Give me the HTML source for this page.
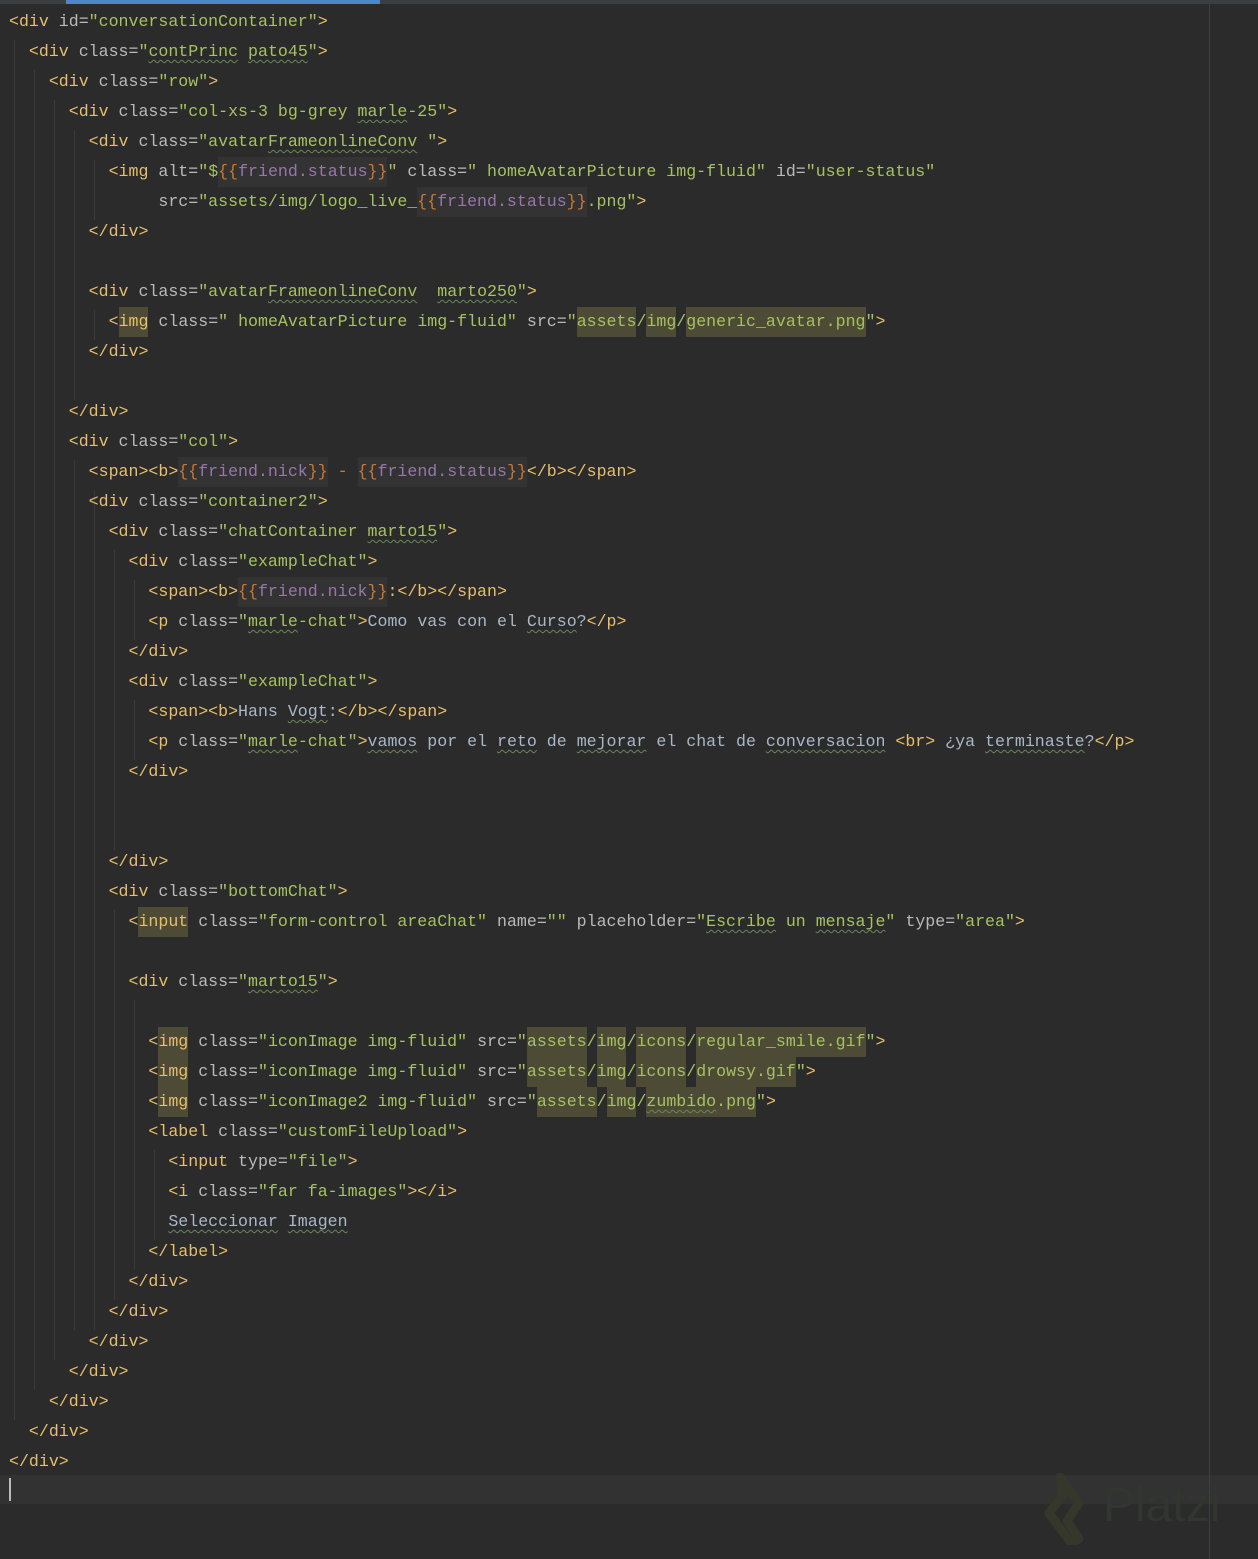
<!DOCTYPE html>
<html><head><meta charset="utf-8"><style>
html,body{margin:0;padding:0;background:#2b2b2b;width:1258px;height:1559px;overflow:hidden}
#bar{position:absolute;left:66px;top:0;width:314px;height:4px;background:#4a88c7}
#topline{position:absolute;left:0;top:0;width:1258px;height:4px;background:#3c3f41;z-index:0}
#rl{position:absolute;left:1209px;top:4px;width:1px;height:1555px;background:#3f3f3f}
#cur{position:absolute;left:0;top:1475px;width:1258px;height:29px;background:#323232}
#caret{position:absolute;left:9px;top:1478px;width:2px;height:23px;background:#bbb}
#code{position:absolute;left:9px;top:7px;font-family:"Liberation Mono",monospace;font-size:16.6px;color:#a9b7c6}
.l{height:30px;line-height:30px;white-space:pre}
.t{color:#e8bf6a}.a{color:#bababa}.v{color:#a5c261}.b{color:#cc7832}.p{color:#9876aa}.x{color:#a9b7c6}
.h{background:#4d4b35;display:inline-block;height:30px}
.g{background:#333333;display:inline-block;height:30px}
.w{text-decoration:underline wavy #6a8759;text-decoration-thickness:1px;text-underline-offset:3px}
.gl{position:absolute;width:1px;background:#3a3a3a}
</style></head><body>
<div id="topline"></div><div id="bar"></div>
<div id="cur"></div><div id="caret"></div>
<div id="rl"></div>
<div class="gl" style="left:14px;top:40px;height:1380px"></div>
<div class="gl" style="left:34px;top:70px;height:1320px"></div>
<div class="gl" style="left:54px;top:100px;height:1260px"></div>
<div class="gl" style="left:74px;top:130px;height:270px"></div>
<div class="gl" style="left:74px;top:460px;height:870px"></div>
<div class="gl" style="left:94px;top:160px;height:60px"></div>
<div class="gl" style="left:94px;top:310px;height:30px"></div>
<div class="gl" style="left:94px;top:490px;height:840px"></div>
<div class="gl" style="left:114px;top:550px;height:300px"></div>
<div class="gl" style="left:114px;top:910px;height:390px"></div>
<div class="gl" style="left:134px;top:580px;height:60px"></div>
<div class="gl" style="left:134px;top:700px;height:60px"></div>
<div class="gl" style="left:134px;top:1000px;height:270px"></div>
<div class="gl" style="left:154px;top:1150px;height:90px"></div>
<svg style="position:absolute;left:1035px;top:1473px" width="60" height="72" viewBox="0 0 60 72"><path d="M25 4 L44 30 L32 48 L44 66 L36 70 L14 40 L28 22 Z" fill="none" stroke="#34372a" stroke-width="9" stroke-linejoin="round"/></svg>
<div style="position:absolute;left:1103px;top:1478px;font-family:'Liberation Sans',sans-serif;font-size:48px;color:#323530">Platzi</div>
<div id="code">
<div class="l"><span class="t">&lt;div </span><span class="a">id=</span><span class="v">"conversationContainer"</span><span class="t">&gt;</span></div>
<div class="l">  <span class="t">&lt;div </span><span class="a">class=</span><span class="v">"<span class="w">contPrinc</span> <span class="w">pato45</span>"</span><span class="t">&gt;</span></div>
<div class="l">    <span class="t">&lt;div </span><span class="a">class=</span><span class="v">"row"</span><span class="t">&gt;</span></div>
<div class="l">      <span class="t">&lt;div </span><span class="a">class=</span><span class="v">"col-xs-3 bg-grey <span class="w">marle</span>-25"</span><span class="t">&gt;</span></div>
<div class="l">        <span class="t">&lt;div </span><span class="a">class=</span><span class="v">"avatar<span class="w">FrameonlineConv</span> "</span><span class="t">&gt;</span></div>
<div class="l">          <span class="t">&lt;img </span><span class="a">alt=</span><span class="v">"$</span><span class="g"><span class="b">{{</span><span class="p">friend.status</span><span class="b">}}</span></span><span class="v">"</span> <span class="a">class=</span><span class="v">" homeAvatarPicture img-fluid"</span> <span class="a">id=</span><span class="v">"user-status"</span></div>
<div class="l">               <span class="a">src=</span><span class="v">"assets/img/logo_live_</span><span class="g"><span class="b">{{</span><span class="p">friend.status</span><span class="b">}}</span></span><span class="v">.png"</span><span class="t">&gt;</span></div>
<div class="l">        <span class="t">&lt;/div&gt;</span></div>
<div class="l"> </div>
<div class="l">        <span class="t">&lt;div </span><span class="a">class=</span><span class="v">"avatar<span class="w">FrameonlineConv</span>  <span class="w">marto250</span>"</span><span class="t">&gt;</span></div>
<div class="l">          <span class="t">&lt;</span><span class="h t">img</span> <span class="a">class=</span><span class="v">" homeAvatarPicture img-fluid"</span> <span class="a">src=</span><span class="v">"<span class="h">assets</span>/<span class="h">img</span>/<span class="h">generic_avatar.png</span>"</span><span class="t">&gt;</span></div>
<div class="l">        <span class="t">&lt;/div&gt;</span></div>
<div class="l"> </div>
<div class="l">      <span class="t">&lt;/div&gt;</span></div>
<div class="l">      <span class="t">&lt;div </span><span class="a">class=</span><span class="v">"col"</span><span class="t">&gt;</span></div>
<div class="l">        <span class="t">&lt;span&gt;&lt;b&gt;</span><span class="g"><span class="b">{{</span><span class="p">friend.nick</span><span class="b">}}</span></span> <span class="b">-</span> <span class="g"><span class="b">{{</span><span class="p">friend.status</span><span class="b">}}</span></span><span class="t">&lt;/b&gt;&lt;/span&gt;</span></div>
<div class="l">        <span class="t">&lt;div </span><span class="a">class=</span><span class="v">"container2"</span><span class="t">&gt;</span></div>
<div class="l">          <span class="t">&lt;div </span><span class="a">class=</span><span class="v">"chatContainer <span class="w">marto15</span>"</span><span class="t">&gt;</span></div>
<div class="l">            <span class="t">&lt;div </span><span class="a">class=</span><span class="v">"exampleChat"</span><span class="t">&gt;</span></div>
<div class="l">              <span class="t">&lt;span&gt;&lt;b&gt;</span><span class="g"><span class="b">{{</span><span class="p">friend.nick</span><span class="b">}}</span></span><span class="t">:&lt;/b&gt;&lt;/span&gt;</span></div>
<div class="l">              <span class="t">&lt;p </span><span class="a">class=</span><span class="v">"<span class="w">marle</span>-chat"</span><span class="t">&gt;</span>Como vas con el <span class="w">Curso</span>?<span class="t">&lt;/p&gt;</span></div>
<div class="l">            <span class="t">&lt;/div&gt;</span></div>
<div class="l">            <span class="t">&lt;div </span><span class="a">class=</span><span class="v">"exampleChat"</span><span class="t">&gt;</span></div>
<div class="l">              <span class="t">&lt;span&gt;&lt;b&gt;</span>Hans <span class="w">Vogt</span>:<span class="t">&lt;/b&gt;&lt;/span&gt;</span></div>
<div class="l">              <span class="t">&lt;p </span><span class="a">class=</span><span class="v">"<span class="w">marle</span>-chat"</span><span class="t">&gt;</span><span class="w">vamos</span> por el <span class="w">reto</span> de <span class="w">mejorar</span> el chat de <span class="w">conversacion</span> <span class="t">&lt;br&gt;</span> ¿ya <span class="w">terminaste</span>?<span class="t">&lt;/p&gt;</span></div>
<div class="l">            <span class="t">&lt;/div&gt;</span></div>
<div class="l"> </div>
<div class="l"> </div>
<div class="l">          <span class="t">&lt;/div&gt;</span></div>
<div class="l">          <span class="t">&lt;div </span><span class="a">class=</span><span class="v">"bottomChat"</span><span class="t">&gt;</span></div>
<div class="l">            <span class="t">&lt;</span><span class="h t">input</span> <span class="a">class=</span><span class="v">"form-control areaChat"</span> <span class="a">name=</span><span class="v">""</span> <span class="a">placeholder=</span><span class="v">"<span class="w">Escribe</span> un <span class="w">mensaje</span>"</span> <span class="a">type=</span><span class="v">"area"</span><span class="t">&gt;</span></div>
<div class="l"> </div>
<div class="l">            <span class="t">&lt;div </span><span class="a">class=</span><span class="v">"<span class="w">marto15</span>"</span><span class="t">&gt;</span></div>
<div class="l"> </div>
<div class="l">              <span class="t">&lt;</span><span class="h t">img</span> <span class="a">class=</span><span class="v">"iconImage img-fluid"</span> <span class="a">src=</span><span class="v">"<span class="h">assets</span>/<span class="h">img</span>/<span class="h">icons</span>/<span class="h">regular_smile.gif</span>"</span><span class="t">&gt;</span></div>
<div class="l">              <span class="t">&lt;</span><span class="h t">img</span> <span class="a">class=</span><span class="v">"iconImage img-fluid"</span> <span class="a">src=</span><span class="v">"<span class="h">assets</span>/<span class="h">img</span>/<span class="h">icons</span>/<span class="h">drowsy.gif</span>"</span><span class="t">&gt;</span></div>
<div class="l">              <span class="t">&lt;</span><span class="h t">img</span> <span class="a">class=</span><span class="v">"iconImage2 img-fluid"</span> <span class="a">src=</span><span class="v">"<span class="h">assets</span>/<span class="h">img</span>/<span class="h"><span class="w">zumbido</span>.png</span>"</span><span class="t">&gt;</span></div>
<div class="l">              <span class="t">&lt;label </span><span class="a">class=</span><span class="v">"customFileUpload"</span><span class="t">&gt;</span></div>
<div class="l">                <span class="t">&lt;input </span><span class="a">type=</span><span class="v">"file"</span><span class="t">&gt;</span></div>
<div class="l">                <span class="t">&lt;i </span><span class="a">class=</span><span class="v">"far fa-images"</span><span class="t">&gt;&lt;/i&gt;</span></div>
<div class="l">                <span class="w">Seleccionar</span> <span class="w">Imagen</span></div>
<div class="l">              <span class="t">&lt;/label&gt;</span></div>
<div class="l">            <span class="t">&lt;/div&gt;</span></div>
<div class="l">          <span class="t">&lt;/div&gt;</span></div>
<div class="l">        <span class="t">&lt;/div&gt;</span></div>
<div class="l">      <span class="t">&lt;/div&gt;</span></div>
<div class="l">    <span class="t">&lt;/div&gt;</span></div>
<div class="l">  <span class="t">&lt;/div&gt;</span></div>
<div class="l"><span class="t">&lt;/div&gt;</span></div>
</div>
</body></html>
